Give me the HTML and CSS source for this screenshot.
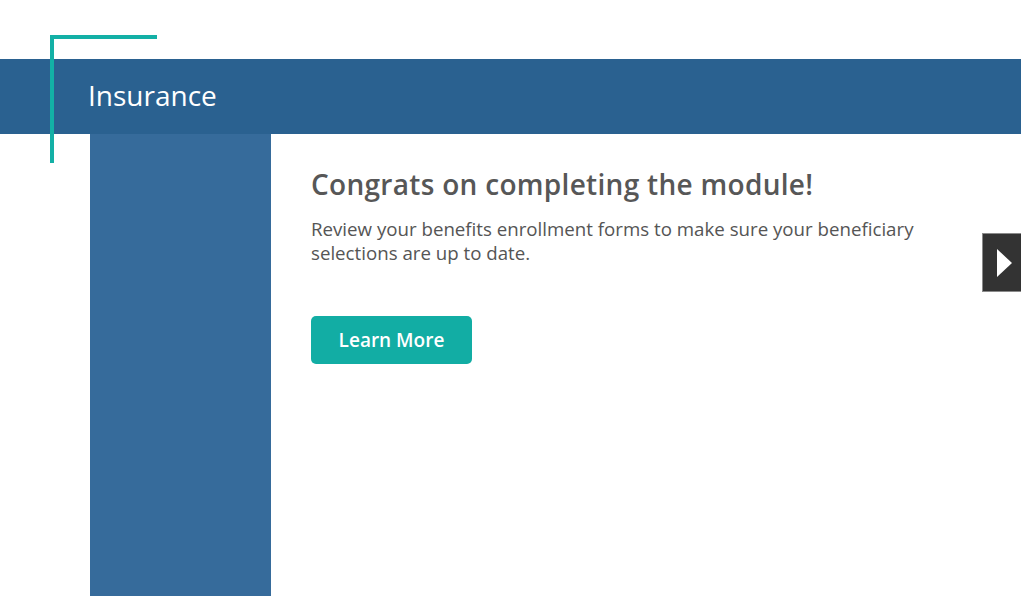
FILE: index.html
```html
<!DOCTYPE html>
<html>
<head>
<meta charset="utf-8">
<link rel="stylesheet" href="styles.css">
</head>
<body>
<div class="page">
  <div class="bracket"></div>
  <header class="topbar">
    <h1 class="title">Insurance</h1>
  </header>
  <div class="body-row">
    <aside class="sidebar"></aside>
    <main class="content">
      <h2 class="heading">Congrats on completing the module!</h2>
      <p class="text">Review your benefits enrollment forms to make sure your beneficiary selections are up to date.</p>
      <button class="btn">Learn More</button>
    </main>
  </div>
  <div class="next-tab">
    <svg width="15" height="28" viewBox="0 0 15 28"><polygon points="0,0 15,14 0,28" fill="#ffffff"/></svg>
  </div>
</div>
</body>
</html>
```
FILE: styles.css
```css
html, body {
  margin: 0;
  padding: 0;
  background: #ffffff;
  font-family: "Open Sans", Lato, sans-serif;
}
.page {
  position: relative;
  width: 1021px;
  height: 596px;
  overflow: hidden;
  padding-top: 59px;
  box-sizing: border-box;
}
.bracket {
  position: absolute;
  left: 50px;
  top: 35px;
  width: 103px;
  height: 124px;
  border-top: 4px solid #13b0a6;
  border-left: 4px solid #13b0a6;
  z-index: 2;
}
.topbar {
  height: 75px;
  background: #2a6190;
  display: flex;
  align-items: center;
  padding-left: 88px;
  padding-bottom: 4px;
  box-sizing: border-box;
}
.title {
  margin: 0;
  color: #ffffff;
  font-size: 28px;
  font-weight: 500;
}
.body-row {
  display: flex;
  height: 462px;
}
.sidebar {
  margin-left: 90px;
  width: 181px;
  background: #366b9b;
}
.content {
  padding-left: 40px;
  padding-top: 32px;
  width: 660px;
}
.heading {
  margin: 0;
  color: #575757;
  font-size: 28px;
  font-weight: 600;
  line-height: 36px;
  letter-spacing: 0.3px;
}
.text {
  margin: 15px 0 0;
  color: #555555;
  font-size: 18.7px;
  font-weight: 500;
  line-height: 24px;
  width: 650px;
}
.btn {
  margin-top: 51px;
  width: 161px;
  height: 48px;
  border: none;
  border-radius: 5px;
  background: #12ada4;
  color: #ffffff;
  font-family: "Open Sans", Lato, sans-serif;
  font-size: 19px;
  font-weight: 600;
  padding: 0;
}
.next-tab {
  position: absolute;
  left: 982px;
  top: 233px;
  width: 39px;
  height: 59px;
  background: #333333;
  border: 1px solid #8a8a8a;
  border-right: none;
  box-sizing: border-box;
  display: flex;
  align-items: center;
  justify-content: center;
  padding-left: 4px;
}
```
